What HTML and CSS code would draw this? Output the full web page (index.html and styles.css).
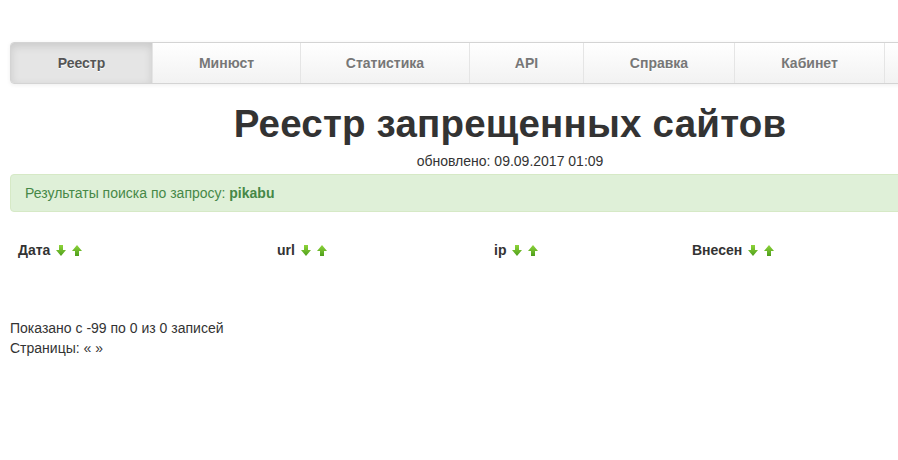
FILE: index.html
```html
<!DOCTYPE html>
<html lang="ru">
<head>
  <meta charset="UTF-8" />
  <title>Реестр запрещенных сайтов</title>
  <link rel="stylesheet" href="styles.css">
</head>
<body>
  <div class="container">
    <ul class="main-nav">
      <li class="active"><a href="#">Реестр</a></li>
      <li><a href="#">Минюст</a></li>
      <li><a href="#">Статистика</a></li>
      <li><a href="#">API</a></li>
      <li><a href="#">Справка</a></li>
      <li><a href="#">Кабинет</a></li>
      <li><a href="#"></a></li>
    </ul>

    <h1>Реестр запрещенных сайтов</h1>
    <p class="updated">обновлено: 09.09.2017 01:09</p>

    <div class="alert-success">Результаты поиска по запросу: <strong>pikabu</strong></div>

    <table class="registry">
      <thead>
        <tr>
          <th class="col-date">Дата <span class="sort"><a href="#" class="down"></a><a href="#" class="up"></a></span></th>
          <th class="col-url">url <span class="sort"><a href="#" class="down"></a><a href="#" class="up"></a></span></th>
          <th class="col-ip">ip <span class="sort"><a href="#" class="down"></a><a href="#" class="up"></a></span></th>
          <th>Внесен <span class="sort"><a href="#" class="down"></a><a href="#" class="up"></a></span></th>
        </tr>
      </thead>
      <tbody></tbody>
    </table>

    <div class="pager-info">
      <p>Показано с -99 по 0 из 0 записей</p>
      <p>Страницы: <a href="#">«</a> <a href="#">»</a></p>
    </div>
  </div>

  <script>
    // стрелки сортировки
    const arrow = dir => `<svg width="10" height="11" viewBox="0 0 10 11">
      <defs><linearGradient id="g${dir}" x1="0" y1="0" x2="0" y2="1">
        <stop offset="0" stop-color="#8ed43a"/><stop offset="1" stop-color="#4e9e1c"/>
      </linearGradient></defs>
      <path d="${dir === 'down' ? 'M3 0H7V5H10L5 11L0 5H3Z' : 'M3 11H7V6H10L5 0L0 6H3Z'}" fill="url(#g${dir})"/>
    </svg>`;
    document.querySelectorAll(".sort a").forEach(a => {
      a.innerHTML = arrow(a.className);
    });
  </script>
</body>
</html>
```

FILE: styles.css
```css
html, body {
  overflow-x: hidden;
}

body {
  font-family: "Liberation Sans", Arial, sans-serif;
  font-size: 14px;
  line-height: 20px;
  color: #333;
  background: #fff;
  margin: 0;
  padding: 42px 0 0 10px;
}

.container {
  width: 1000px;
}

.main-nav {
  display: grid;
  grid-template-columns: 141px 148px 169px 114px 151px 150px 1fr;
  list-style: none;
  margin: 0;
  padding: 0;
  height: 40px;
  border: 1px solid #d4d4d4;
  border-radius: 4px;
  background: linear-gradient(#ffffff, #f2f2f2);
  box-shadow: 0 1px 4px rgba(0,0,0,0.065);
  overflow: hidden;
}

.main-nav li {
  border-left: 1px solid #e5e5e5;
}

.main-nav li:first-child {
  border-left: none;
}

.main-nav a {
  display: block;
  text-align: center;
  line-height: 40px;
  font-weight: bold;
  color: #777;
  text-decoration: none;
  text-shadow: 0 1px 0 #fff;
}

.main-nav li.active {
  background: #e5e5e5;
  box-shadow: inset 0 3px 8px rgba(0,0,0,0.125);
}

.main-nav li.active a {
  color: #555;
}

h1 {
  font-size: 38.5px;
  line-height: 40px;
  font-weight: bold;
  text-align: center;
  color: #333;
  letter-spacing: 0.2px;
  margin: 20px 0 0;
}

.updated {
  text-align: center;
  margin: 7px 0 0;
  line-height: 20px;
}

.alert-success {
  margin: 3px 0 20px;
  padding: 8px 35px 8px 14px;
  color: #468847;
  background: #dff0d8;
  border: 1px solid #d6e9c6;
  border-radius: 4px;
}

.registry {
  width: 100%;
  border-collapse: collapse;
  margin-bottom: 50px;
}

.registry th {
  text-align: left;
  padding: 8px;
  font-weight: bold;
}

.col-date { width: 243px; }
.col-url { width: 201px; }
.col-ip { width: 182px; }

.sort a {
  display: inline-block;
  margin-left: 6px;
  vertical-align: -1px;
}

.sort a:first-child {
  margin-left: 2px;
}

.sort svg {
  display: block;
}

.pager-info p {
  margin: 0;
}

.pager-info a {
  color: #333;
  text-decoration: none;
}
```
